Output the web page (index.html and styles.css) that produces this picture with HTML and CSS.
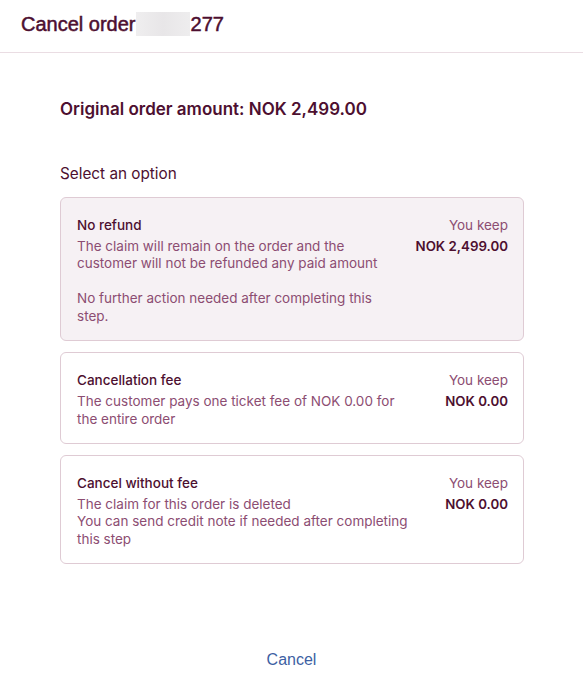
FILE: index.html
```html
<!DOCTYPE html>
<html lang="en">
<head>
<meta charset="utf-8">
<title>Cancel order</title>
<link rel="stylesheet" href="styles.css">
</head>
<body>
<div class="dialog">
  <header class="dialog-header">
    <h1 class="dialog-title">Cancel order <span class="redacted"></span>277</h1>
  </header>
  <main class="dialog-body">
    <h2 class="amount">Original order amount: NOK 2,499.00</h2>
    <p class="select-label">Select an option</p>
    <div class="options">
      <div class="option selected">
        <div class="option-main">
          <div class="option-title">No refund</div>
          <p class="option-desc">The claim will remain on the order and the<br>customer will not be refunded any paid amount</p>
          <p class="option-desc spaced">No further action needed after completing this<br>step.</p>
        </div>
        <div class="option-side">
          <div class="keep-label">You keep</div>
          <div class="keep-amount">NOK 2,499.00</div>
        </div>
      </div>
      <div class="option">
        <div class="option-main">
          <div class="option-title">Cancellation fee</div>
          <p class="option-desc">The customer pays one ticket fee of NOK 0.00 for<br>the entire order</p>
        </div>
        <div class="option-side">
          <div class="keep-label">You keep</div>
          <div class="keep-amount">NOK 0.00</div>
        </div>
      </div>
      <div class="option">
        <div class="option-main">
          <div class="option-title">Cancel without fee</div>
          <p class="option-desc">The claim for this order is deleted<br>You can send credit note if needed after completing<br>this step</p>
        </div>
        <div class="option-side">
          <div class="keep-label">You keep</div>
          <div class="keep-amount">NOK 0.00</div>
        </div>
      </div>
    </div>
  </main>
  <footer class="dialog-footer">
    <button class="cancel-btn" type="button">Cancel</button>
  </footer>
</div>
</body>
</html>
```
FILE: styles.css
```css
* { box-sizing: border-box; }
html, body { margin: 0; padding: 0; background: #ffffff; }
body { font-family: Inter, "Noto Sans", sans-serif; color: #4d0f30; }

.dialog { width: 583px; height: 686px; display: flex; flex-direction: column; }

.dialog-header {
  height: 53px;
  border-bottom: 1px solid #eadde3;
  padding: 0 21px;
  display: flex;
  align-items: center;
}
.dialog-title {
  margin: -4px 0 0;
  font-family: "Liberation Sans", Arial, sans-serif;
  font-size: 20px;
  font-weight: 400;
  -webkit-text-stroke: 0.5px #4d0f30;
  color: #4d0f30;
  display: flex;
  align-items: center;
}
.redacted {
  display: inline-block;
  width: 54px;
  height: 24px;
  margin-left: 0;
  margin-right: 1px;
  background: linear-gradient(90deg, #efeeef, #e8e6e8 50%, #eeedee);
}

.dialog-body { padding: 0 59px 0 60px; flex: 1; }

.amount {
  margin: 44px 0 0;
  font-size: 17px;
  line-height: 24px;
  font-weight: 600;
  color: #4d0f30;
}
.select-label {
  margin: 42px 0 0;
  font-size: 15.3px;
  line-height: 22px;
  color: #4d0f30;
}

.options { margin-top: 12px; display: flex; flex-direction: column; gap: 11px; }

.option {
  display: flex;
  justify-content: space-between;
  gap: 12px;
  border: 1px solid #dfcbd4;
  border-radius: 6px;
  padding: 17px 15px 15px 16px;
  background: #ffffff;
}
.option.selected { background: #f6f1f4; }

.option-main { flex: 1; min-width: 0; }
.option-title {
  font-size: 13.5px;
  line-height: 20px;
  font-weight: 500;
  color: #4d0f30;
  margin-bottom: 2.75px;
}
.option-desc {
  margin: 0;
  font-size: 13.5px;
  line-height: 17.5px;
  color: #8c4d72;
}
.option-desc.spaced { margin-top: 17.5px; }

.option-side { flex-shrink: 0; text-align: right; white-space: nowrap; }
.keep-label {
  font-size: 13.5px;
  line-height: 20px;
  color: #8c4d72;
  margin-bottom: 2.75px;
}
.keep-amount {
  font-size: 13.3px;
  line-height: 17.5px;
  font-weight: 600;
  color: #4d0f30;
}

.dialog-footer {
  display: flex;
  justify-content: center;
  padding-bottom: 15px;
}
.cancel-btn {
  border: none;
  background: none;
  padding: 0;
  font-family: "Liberation Sans", Arial, sans-serif;
  font-size: 16px;
  line-height: 22px;
  color: #3d5fa3;
  cursor: pointer;
}
```
